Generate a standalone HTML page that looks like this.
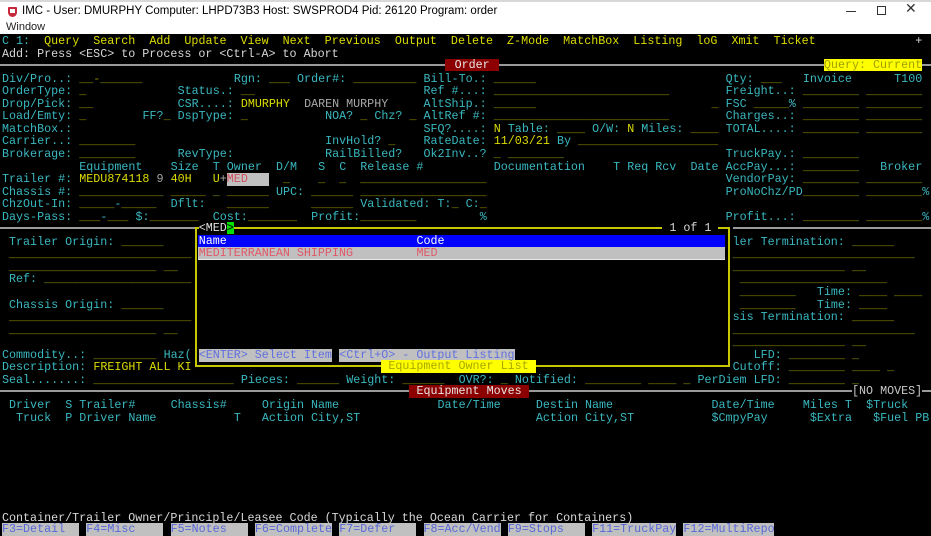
<!DOCTYPE html>
<html><head><meta charset="utf-8"><style>
*{margin:0;padding:0;box-sizing:border-box}
body{width:931px;height:536px;overflow:hidden;background:#000;position:relative;font-family:"Liberation Mono",monospace;font-size:11.708px;line-height:12.55px}
#tb{position:absolute;left:0;top:0;width:931px;height:33.5px;background:#fff;font-family:"Liberation Sans",sans-serif;color:#000}
#tb .t{position:absolute;left:22px;top:4px;font-size:11.5px;line-height:14px}
#tb .m{position:absolute;left:6px;top:21px;font-size:11px;line-height:13px;color:#222}
.r{position:absolute;left:0;top:calc(var(--r)*12.55px + 35px);height:12.55px;width:931px}
.r>*{position:absolute;left:calc(var(--c)*7.025px + 2px);top:0;white-space:pre}
.c{color:#3ab8c0}.y{color:#dcdc00}.o{color:#8c8c00}.g{color:#a8a8a8}.w{color:#d8d8d8}
.hl{position:absolute;height:2px;background:#9a9a9a}
.fk{background:#c0c0c0;color:#5868d8;height:13px}
</style></head><body>
<div id="tb">
<div style="position:absolute;left:0;top:0;width:931px;height:2px;background:#d8d8d8"></div>
<div style="position:absolute;left:8px;top:7px;width:9px;height:10px;background:#c8283c;border-radius:1px 1px 5px 5px"></div>
<div style="position:absolute;left:10px;top:9px;width:5px;height:4px;background:#fff"></div>
<div class="t">IMC - User: DMURPHY Computer: LHPD73B3 Host: SWSPROD4 Pid: 26120 Program: order</div>
<div class="m">Window</div>
<div style="position:absolute;left:846px;top:11px;width:10px;height:1px;background:#333"></div>
<div style="position:absolute;left:877px;top:6px;width:9px;height:9px;border:1px solid #333"></div>
<div style="position:absolute;left:905px;top:2px;font-size:14px;color:#333">✕</div>
</div>

<div class="hl" style="left:0;top:64px;width:931px"></div>
<div class="hl" style="left:0;top:227px;width:195px"></div>
<div class="hl" style="left:733px;top:227px;width:198px"></div>
<div class="hl" style="left:0;top:390px;width:931px"></div>

<div class="r" style="--r:0"><span class="c" style="--c:0">C 1:</span><span class="y" style="--c:6">Query  Search  Add  Update  View  Next  Previous  Output  Delete  Z-Mode  MatchBox  Listing  loG  Xmit  Ticket</span><span class="w" style="--c:130">+</span></div>
<div class="r" style="--r:1"><span class="w" style="--c:0">Add: Press &lt;ESC&gt; to Process or &lt;Ctrl-A&gt; to Abort</span></div>
<div class="r" style="--r:2;top:58.8px"><span style="--c:63;background:#8c0000;color:#e8e8e8;padding:0 2px 0 3px"> Order </span><span style="--c:117;background:#ffff00;color:#a0a000">Query: Current</span></div>
<div class="r" style="--r:3"><span class="c" style="--c:0">Div/Pro..:</span><span class="o" style="--c:11">__-______</span><span class="c" style="--c:33">Rgn:</span><span class="o" style="--c:38">___</span><span class="c" style="--c:42">Order#:</span><span class="o" style="--c:50">_________</span><span class="c" style="--c:60">Bill-To.:</span><span class="o" style="--c:70">______</span><span class="c" style="--c:103">Qty:</span><span class="o" style="--c:108">___</span><span class="c" style="--c:114">Invoice</span><span class="c" style="--c:127">T100</span></div>
<div class="r" style="--r:4"><span class="c" style="--c:0">OrderType:</span><span class="o" style="--c:11">_</span><span class="c" style="--c:25">Status.:</span><span class="o" style="--c:34">__</span><span class="c" style="--c:60">Ref #...:</span><span class="o" style="--c:70">_________________________</span><span class="c" style="--c:103">Freight..:</span><span class="o" style="--c:114">________</span><span class="o" style="--c:123">________</span></div>
<div class="r" style="--r:5"><span class="c" style="--c:0">Drop/Pick:</span><span class="o" style="--c:11">__</span><span class="c" style="--c:25">CSR....:</span><span class="y" style="--c:34">DMURPHY</span><span class="g" style="--c:43">DAREN MURPHY</span><span class="c" style="--c:60">AltShip.:</span><span class="o" style="--c:70">______</span><span class="o" style="--c:101">_</span><span class="c" style="--c:103">FSC</span><span class="o" style="--c:107">_____</span><span class="c" style="--c:112">%</span><span class="o" style="--c:114">________</span><span class="o" style="--c:123">________</span></div>
<div class="r" style="--r:6"><span class="c" style="--c:0">Load/Emty:</span><span class="o" style="--c:11">_</span><span class="c" style="--c:20">FF?</span><span class="o" style="--c:23">_</span><span class="c" style="--c:25">DspType:</span><span class="o" style="--c:34">_</span><span class="c" style="--c:46">NOA?</span><span class="o" style="--c:51">_</span><span class="c" style="--c:53">Chz?</span><span class="o" style="--c:58">_</span><span class="c" style="--c:60">AltRef #:</span><span class="o" style="--c:70">_________________________</span><span class="c" style="--c:103">Charges..:</span><span class="o" style="--c:114">________</span><span class="o" style="--c:123">________</span></div>
<div class="r" style="--r:7"><span class="c" style="--c:0">MatchBox.:</span><span class="c" style="--c:60">SFQ?....:</span><span class="y" style="--c:70">N</span><span class="c" style="--c:72">Table:</span><span class="o" style="--c:79">____</span><span class="c" style="--c:84">O/W:</span><span class="y" style="--c:89">N</span><span class="c" style="--c:91">Miles:</span><span class="o" style="--c:98">____</span><span class="c" style="--c:103">TOTAL....:</span><span class="o" style="--c:114">________</span><span class="o" style="--c:123">________</span></div>
<div class="r" style="--r:8"><span class="c" style="--c:0">Carrier..:</span><span class="o" style="--c:11">________</span><span class="c" style="--c:46">InvHold?</span><span class="o" style="--c:55">_</span><span class="c" style="--c:60">RateDate:</span><span class="y" style="--c:70">11/03/21</span><span class="c" style="--c:79">By</span><span class="o" style="--c:82">____________________</span></div>
<div class="r" style="--r:9"><span class="c" style="--c:0">Brokerage:</span><span class="o" style="--c:11">________</span><span class="c" style="--c:25">RevType:</span><span class="c" style="--c:46">RailBilled?</span><span class="c" style="--c:60">Ok2Inv..?</span><span class="o" style="--c:70">_</span><span class="o" style="--c:72">________</span><span class="c" style="--c:103">TruckPay.:</span><span class="o" style="--c:114">________</span></div>
<div class="r" style="--r:10"><span class="c" style="--c:11">Equipment</span><span class="c" style="--c:24">Size</span><span class="c" style="--c:30">T</span><span class="c" style="--c:32">Owner</span><span class="c" style="--c:39">D/M</span><span class="c" style="--c:45">S</span><span class="c" style="--c:48">C</span><span class="c" style="--c:51">Release #</span><span class="c" style="--c:70">Documentation</span><span class="c" style="--c:87">T Req Rcv</span><span class="c" style="--c:98">Date</span><span class="c" style="--c:103">AccPay...:</span><span class="o" style="--c:114">________</span><span class="c" style="--c:125">Broker</span></div>
<div class="r" style="--r:11"><span class="c" style="--c:0">Trailer #:</span><span class="y" style="--c:11">MEDU874118</span><span class="g" style="--c:22">9</span><span class="y" style="--c:24">40H</span><span class="y" style="--c:30">U</span><span class="g" style="--c:31">+</span><span style="--c:32;background:#c0c0c0;color:#d05060;width:42.15px">MED</span><span class="o" style="--c:40">_</span><span class="o" style="--c:45">_</span><span class="o" style="--c:48">_</span><span class="o" style="--c:51">__________________</span><span class="c" style="--c:103">VendorPay:</span><span class="o" style="--c:114">________</span><span class="o" style="--c:123">________</span></div>
<div class="r" style="--r:12"><span class="c" style="--c:0">Chassis #:</span><span class="o" style="--c:11">____________</span><span class="o" style="--c:24">_____</span><span class="o" style="--c:30">_</span><span class="o" style="--c:32">______</span><span class="c" style="--c:39">UPC:</span><span class="o" style="--c:44">______</span><span class="o" style="--c:51">__________________</span><span class="c" style="--c:103">ProNoChz/PD</span><span class="o" style="--c:114">________</span><span class="o" style="--c:123">________</span><span class="c" style="--c:131">%</span></div>
<div class="r" style="--r:13"><span class="c" style="--c:0">ChzOut-In:</span><span class="o" style="--c:11">_____</span><span class="c" style="--c:16">-</span><span class="o" style="--c:17">_____</span><span class="c" style="--c:24">Dflt:</span><span class="o" style="--c:32">______</span><span class="o" style="--c:44">______</span><span class="c" style="--c:51">Validated: T:</span><span class="o" style="--c:64">_</span><span class="c" style="--c:66">C:</span><span class="o" style="--c:68">_</span></div>
<div class="r" style="--r:14"><span class="c" style="--c:0">Days-Pass:</span><span class="o" style="--c:11">___</span><span class="c" style="--c:14">-</span><span class="o" style="--c:15">___</span><span class="c" style="--c:19">$:</span><span class="o" style="--c:21">_______</span><span class="c" style="--c:30">Cost:</span><span class="o" style="--c:35">_______</span><span class="c" style="--c:44">Profit:</span><span class="o" style="--c:51">________</span><span class="c" style="--c:68">%</span><span class="c" style="--c:103">Profit...:</span><span class="o" style="--c:114">________</span><span class="o" style="--c:123">________</span><span class="c" style="--c:131">%</span></div>
<div class="r" style="--r:16"><span class="c" style="--c:1">Trailer Origin:</span><span class="o" style="--c:17">______</span><span class="c" style="--c:104">ler Termination:</span><span class="o" style="--c:121">______</span></div>
<div class="r" style="--r:17"><span class="o" style="--c:1">__________________________</span><span class="o" style="--c:104">__________________________</span></div>
<div class="r" style="--r:18"><span class="o" style="--c:1">_____________________</span><span class="o" style="--c:23">__</span><span class="o" style="--c:104">________________</span><span class="o" style="--c:121">__</span></div>
<div class="r" style="--r:19"><span class="c" style="--c:1">Ref:</span><span class="o" style="--c:6">_____________________</span><span class="o" style="--c:105">_____________________</span></div>
<div class="r" style="--r:20"><span class="o" style="--c:105">________</span><span class="c" style="--c:116">Time:</span><span class="o" style="--c:122">____</span><span class="o" style="--c:127">____</span></div>
<div class="r" style="--r:21"><span class="c" style="--c:1">Chassis Origin:</span><span class="o" style="--c:17">______</span><span class="o" style="--c:105">________</span><span class="c" style="--c:116">Time:</span><span class="o" style="--c:122">____</span></div>
<div class="r" style="--r:22"><span class="o" style="--c:1">__________________________</span><span class="c" style="--c:104">sis Termination:</span><span class="o" style="--c:121">______</span></div>
<div class="r" style="--r:23"><span class="o" style="--c:1">_____________________</span><span class="o" style="--c:23">__</span><span class="o" style="--c:104">__________________________</span></div>
<div class="r" style="--r:24"><span class="o" style="--c:104">________________</span><span class="o" style="--c:121">__</span></div>
<div class="r" style="--r:25"><span class="c" style="--c:0">Commodity..:</span><span class="o" style="--c:13">_________</span><span class="c" style="--c:23">Haz(</span><span class="c" style="--c:107">LFD:</span><span class="o" style="--c:112">________</span><span class="o" style="--c:121">_</span></div>
<div class="r" style="--r:26"><span class="c" style="--c:0">Description:</span><span class="y" style="--c:13">FREIGHT ALL KI</span><span class="c" style="--c:104">Cutoff:</span><span class="o" style="--c:112">________</span><span class="o" style="--c:121">____</span><span class="o" style="--c:126">_</span></div>
<div class="r" style="--r:27"><span class="c" style="--c:0">Seal.......:</span><span class="o" style="--c:13">____________________</span><span class="c" style="--c:34">Pieces:</span><span class="o" style="--c:42">______</span><span class="c" style="--c:49">Weight:</span><span class="o" style="--c:57">______</span><span class="c" style="--c:65">OVR?:</span><span class="o" style="--c:71">_</span><span class="c" style="--c:73">Notified:</span><span class="o" style="--c:83">________</span><span class="o" style="--c:92">____</span><span class="o" style="--c:97">_</span><span class="c" style="--c:99">PerDiem LFD:</span><span class="o" style="--c:112">________</span><span class="o" style="--c:121">_</span></div>
<div class="r" style="--r:28;top:385px"><span style="--c:58;background:#8c0000;color:#e8e8e8"> Equipment Moves </span><span style="--c:121;background:#000;color:#c8c8c8">[NO MOVES]</span></div>
<div class="r" style="--r:29"><span class="c" style="--c:1">Driver</span><span class="c" style="--c:9">S</span><span class="c" style="--c:11">Trailer#</span><span class="c" style="--c:24">Chassis#</span><span class="c" style="--c:37">Origin Name</span><span class="c" style="--c:62">Date/Time</span><span class="c" style="--c:76">Destin Name</span><span class="c" style="--c:101">Date/Time</span><span class="c" style="--c:114">Miles T</span><span class="c" style="--c:123">$Truck</span></div>
<div class="r" style="--r:30"><span class="c" style="--c:2">Truck</span><span class="c" style="--c:9">P</span><span class="c" style="--c:11">Driver Name</span><span class="c" style="--c:33">T</span><span class="c" style="--c:37">Action City,ST</span><span class="c" style="--c:76">Action City,ST</span><span class="c" style="--c:101">$CmpyPay</span><span class="c" style="--c:115">$Extra</span><span class="c" style="--c:124">$Fuel</span><span class="c" style="--c:130">PB</span></div>
<div class="r" style="--r:38"><span class="w" style="--c:0">Container/Trailer Owner/Principle/Leasee Code (Typically the Ocean Carrier for Containers)</span></div>
<div class="r" style="--r:39;top:523px"><span class="fk" style="--c:0;width:77px">F3=Detail</span><span class="fk" style="--c:12;width:77px">F4=Misc</span><span class="fk" style="--c:24;width:77px">F5=Notes</span><span class="fk" style="--c:36;width:77px">F6=Complete</span><span class="fk" style="--c:48;width:77px">F7=Defer</span><span class="fk" style="--c:60;width:77px">F8=Acc/Vend</span><span class="fk" style="--c:72;width:77px">F9=Stops</span><span class="fk" style="--c:84;width:84px">F11=TruckPay</span><span class="fk" style="--c:97;width:91px">F12=MultiRepo</span></div>

<!-- popup -->
<div style="position:absolute;left:195px;top:227px;width:535px;height:140px;border:2px solid #c8c800;background:#000"></div>
<div style="position:absolute;left:198px;top:234.5px;width:527px;height:12.5px;background:#0000ff"></div>
<div style="position:absolute;left:198px;top:247px;width:527px;height:12.5px;background:#c0c0c0;border-bottom:1px solid #e8e8e8"></div>
<div class="r" style="--r:15;top:221.5px"><span style="--c:28;background:#000;color:#e0e0e0">&lt;MED</span><span style="--c:32;background:#00e000;color:#000">&gt;</span><span style="--c:94;background:#000;color:#d8d8d8"> 1 of 1 </span></div>
<div class="r" style="--r:16;top:234.5px"><span style="--c:28;color:#fff">Name</span><span style="--c:59;color:#fff">Code</span></div>
<div class="r" style="--r:17;top:247px"><span style="--c:28;color:#e05868">MEDITERRANEAN SHIPPING</span><span style="--c:59;color:#e05868">MED</span></div>
<div class="r" style="--r:25"><span class="fk" style="--c:28;color:#6070e0">&lt;ENTER&gt; Select Item</span><span class="fk" style="--c:48;color:#6070e0">&lt;Ctrl+O&gt; - Output Listing</span></div>
<div class="r" style="--r:26;top:360px"><span style="--c:54;background:#ffff00;color:#a8a800;height:13px"> Equipment Owner List </span></div>
</body></html>
